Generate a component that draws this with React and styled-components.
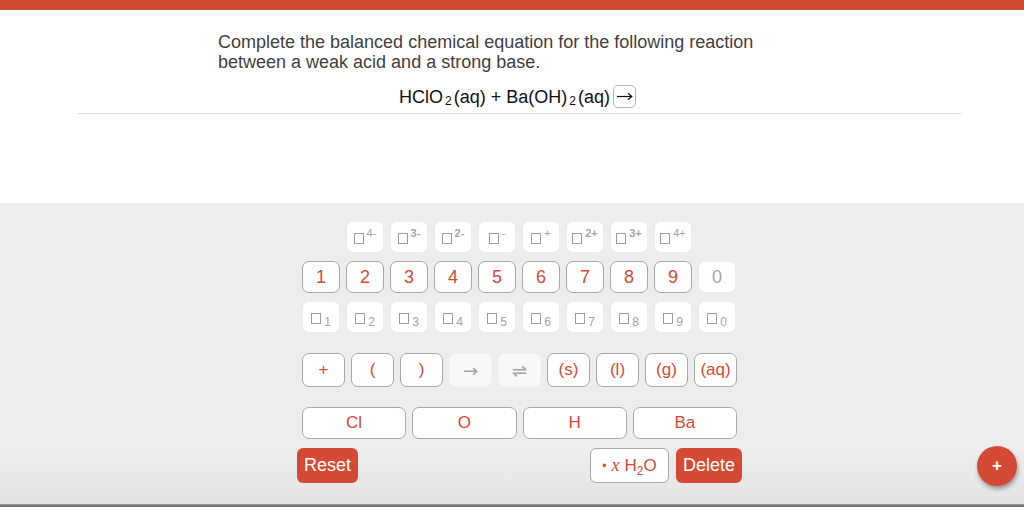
import React from 'react';
import styled, { createGlobalStyle } from 'styled-components';

const GlobalStyle = createGlobalStyle`
  html, body {
    margin: 0;
    padding: 0;
    background: #ffffff;
    font-family: 'Liberation Sans', Arial, sans-serif;
  }
  * {
    box-sizing: border-box;
  }
`;

const RED = '#d44a35';

const charges = [
  { v: '4-', bold: false },
  { v: '3-', bold: true },
  { v: '2-', bold: true },
  { v: '-', bold: false },
  { v: '+', bold: false },
  { v: '2+', bold: true },
  { v: '3+', bold: true },
  { v: '4+', bold: false },
];
const digits = ['1', '2', '3', '4', '5', '6', '7', '8', '9', '0'];
const subs = ['1', '2', '3', '4', '5', '6', '7', '8', '9', '0'];
const symbols = [
  { label: '+', on: true },
  { label: '(', on: true },
  { label: ')', on: true },
  { label: '→', on: false, glyph: true },
  { label: '⇌', on: false, glyph: true },
  { label: '(s)', on: true },
  { label: '(l)', on: true },
  { label: '(g)', on: true },
  { label: '(aq)', on: true },
];
const elements = ['Cl', 'O', 'H', 'Ba'];

const App = () => {
  return (
    <>
      <GlobalStyle />
      <Page>
        <TopBar />
        <Question>
          <Prompt>
            Complete the balanced chemical equation for the following reaction
            <br />
            between a weak acid and a strong base.
          </Prompt>
          <Equation>
            HClO<Sub>2</Sub>(aq) + Ba(OH)<Sub>2</Sub>(aq)
            <ArrowBox>
              <svg width="17" height="9" viewBox="0 0 17 9">
                <path d="M1 4.5H15.5" stroke="#111" strokeWidth="1.2" fill="none" />
                <path d="M12 1.2L15.8 4.5L12 7.8" stroke="#111" strokeWidth="1.2" fill="none" />
              </svg>
            </ArrowBox>
          </Equation>
        </Question>
        <Panel>
          <Keypad>
            <KeyGrid>
              <Spacer />
              {charges.map((c) => (
                <Key key={c.v} $off>
                  <Slot />
                  <ChargeSup $bold={c.bold}>{c.v}</ChargeSup>
                </Key>
              ))}
            </KeyGrid>
            <KeyGrid>
              {digits.map((d) => (
                <Key key={d} $off={d === '0'} $big>
                  {d}
                </Key>
              ))}
            </KeyGrid>
            <KeyGrid>
              {subs.map((s) => (
                <Key key={s} $off>
                  <Slot />
                  <SubDigit>{s}</SubDigit>
                </Key>
              ))}
            </KeyGrid>
            <SymbolRow>
              {symbols.map((s) => (
                <SymbolKey key={s.label} $off={!s.on} $glyph={s.glyph}>
                  {s.label}
                </SymbolKey>
              ))}
            </SymbolRow>
            <ElementRow>
              {elements.map((e) => (
                <ElementKey key={e}>{e}</ElementKey>
              ))}
            </ElementRow>
            <ActionRow>
              <RedButton>Reset</RedButton>
              <ActionRight>
                <WaterKey>
                  <Dot>•</Dot>
                  <MathX>x</MathX>
                  <span>
                    H<WaterSub>2</WaterSub>O
                  </span>
                </WaterKey>
                <RedButton>Delete</RedButton>
              </ActionRight>
            </ActionRow>
          </Keypad>
          <Fab>+</Fab>
        </Panel>
        <BottomEdge />
      </Page>
    </>
  );
};

export default App;

const Page = styled.div`
  position: relative;
  display: flex;
  flex-direction: column;
  width: 1024px;
  height: 507px;
  overflow: hidden;
`;

const TopBar = styled.div`
  height: 10px;
  background: ${RED};
  flex-shrink: 0;
`;

const Question = styled.div`
  margin: 0 63px 0 78px;
  height: 193px;
  display: flex;
  flex-direction: column;
  padding-top: 22px;
`;

const Prompt = styled.p`
  margin: 0 0 0 140px;
  font-size: 18px;
  line-height: 20px;
  color: #3f3f3f;
`;

const Equation = styled.div`
  margin-top: 12px;
  padding: 0 0 4px 321px;
  height: 30px;
  border-bottom: 1px solid #dcdcdc;
  display: flex;
  align-items: center;
  font-size: 18px;
  line-height: 24px;
  color: #111;
`;

const Sub = styled.span`
  font-size: 12px;
  position: relative;
  top: 4px;
  margin: 0 2px;
`;

const ArrowBox = styled.span`
  display: inline-flex;
  align-items: center;
  justify-content: center;
  width: 23px;
  height: 23px;
  margin-left: 3px;
  border: 1px solid #b5b5b5;
  border-radius: 5px;
`;

const Panel = styled.div`
  position: relative;
  flex: 1;
  background: linear-gradient(#ededed 0%, #ededed 82%, #e4e4e4 100%);
  padding-top: 18px;
`;

const Keypad = styled.div`
  margin-left: 297px;
  width: 445px;
  display: flex;
  flex-direction: column;
`;

const KeyGrid = styled.div`
  display: grid;
  grid-template-columns: repeat(10, 38px);
  column-gap: 6px;
  padding: 0 5px;
  margin-bottom: 8px;
`;

const Spacer = styled.div``;

const Key = styled.div`
  height: 32px;
  display: flex;
  align-items: center;
  justify-content: center;
  background: #fff;
  border-radius: 7px;
  border: 1px solid ${(p) => (p.$off ? '#ececec' : '#a9a9a9')};
  color: ${(p) => (p.$off ? '#a4a4a4' : RED)};
  font-size: ${(p) => (p.$big ? '18px' : '12px')};
`;

const Slot = styled.span`
  display: inline-block;
  width: 10px;
  height: 11px;
  border: 1px solid #9d9d9d;
  margin-top: 3px;
`;

const ChargeSup = styled.span`
  font-size: 11px;
  font-weight: ${(p) => (p.$bold ? 700 : 400)};
  margin-left: 3px;
  position: relative;
  top: -4px;
  color: #a4a4a4;
`;

const SubDigit = styled.span`
  font-size: 12px;
  margin-left: 3px;
  position: relative;
  top: 5px;
  color: #a4a4a4;
`;

const SymbolRow = styled.div`
  display: grid;
  grid-template-columns: repeat(9, 43px);
  column-gap: 6px;
  padding: 0 5px;
  margin-top: 12px;
`;

const SymbolKey = styled.div`
  height: 34px;
  display: flex;
  align-items: center;
  justify-content: center;
  border-radius: 7px;
  background: ${(p) => (p.$off ? '#f8f8f8' : '#fff')};
  border: 1px solid ${(p) => (p.$off ? '#f3f3f3' : '#a9a9a9')};
  color: ${(p) => (p.$off ? '#a4a4a4' : RED)};
  font-family: ${(p) => (p.$glyph ? "'DejaVu Sans', sans-serif" : 'inherit')};
  font-size: ${(p) => (p.$glyph ? '18px' : '17px')};
`;

const ElementRow = styled.div`
  display: grid;
  grid-template-columns: repeat(4, 1fr);
  column-gap: 6px;
  padding: 0 5px;
  margin-top: 20px;
`;

const ElementKey = styled.div`
  height: 32px;
  display: flex;
  align-items: center;
  justify-content: center;
  background: #fff;
  border: 1px solid #a9a9a9;
  border-radius: 7px;
  color: ${RED};
  font-size: 17px;
`;

const ActionRow = styled.div`
  display: flex;
  justify-content: space-between;
  align-items: center;
  margin-top: 9px;
`;

const ActionRight = styled.div`
  display: flex;
  gap: 7px;
`;

const RedButton = styled.div`
  height: 35px;
  padding: 0 7px;
  display: flex;
  align-items: center;
  background: ${RED};
  color: #fff;
  border-radius: 6px;
  font-size: 18px;
`;

const WaterKey = styled.div`
  height: 35px;
  width: 79px;
  display: flex;
  align-items: center;
  justify-content: center;
  gap: 5px;
  background: #fff;
  border: 1px solid #a9a9a9;
  border-radius: 6px;
  color: ${RED};
  font-size: 17px;
`;

const Dot = styled.span`
  font-size: 12px;
`;

const MathX = styled.span`
  font-family: 'Liberation Serif', 'DejaVu Serif', serif;
  font-style: italic;
  font-size: 18px;
`;

const WaterSub = styled.span`
  font-size: 12px;
  position: relative;
  top: 4px;
`;

const Fab = styled.div`
  position: absolute;
  right: 7px;
  bottom: 18px;
  width: 40px;
  height: 40px;
  border-radius: 50%;
  background: ${RED};
  color: #fff;
  display: flex;
  align-items: center;
  justify-content: center;
  font-size: 17px;
  font-weight: 700;
  box-shadow: 1px 3px 4px rgba(0, 0, 0, 0.35);
`;

const BottomEdge = styled.div`
  height: 3px;
  flex-shrink: 0;
  background: linear-gradient(#9a9a9a, #5f6466);
`;
